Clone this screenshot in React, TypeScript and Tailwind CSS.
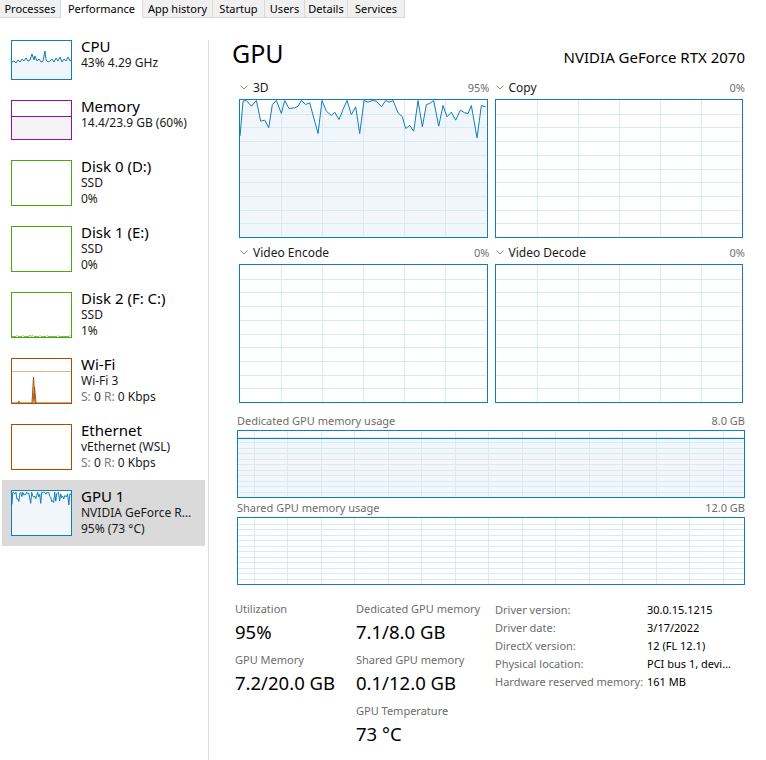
import React from "react";

const BLUE = "#117dbb";
const BLUEFILL = "#f1f6fa";
const GRID = "#d9eaf4";

type Pt = [number, number];

function Chart({
  w,
  h,
  cols = 0,
  rows = 0,
  colOffset = 0,
  colStep,
  pts,
  color = BLUE,
  fill = BLUEFILL,
  gridColor = GRID,
  extra,
}: {
  w: number;
  h: number;
  cols?: number;
  rows?: number;
  colOffset?: number;
  colStep?: number;
  pts?: Pt[][];
  color?: string;
  fill?: string;
  gridColor?: string;
  extra?: React.ReactNode;
}) {
  const vlines: number[] = [];
  if (cols > 0 || colStep) {
    const s = colStep ?? w / cols;
    for (let x = colOffset || s; x < w - 0.5; x += s) vlines.push(Math.round(x));
  }
  const hlines: number[] = [];
  if (rows > 0) {
    const s = h / rows;
    for (let y = s; y < h - 0.5; y += s) hlines.push(Math.round(y));
  }
  return (
    <svg width={w} height={h} className="block">
      {pts &&
        pts.slice(0, 1).map((p, i) => (
          <polygon
            key={"f" + i}
            points={`${p[0][0]},${h} ${p.map(([x, y]) => `${x},${y}`).join(" ")} ${p[p.length - 1][0]},${h}`}
            fill={fill}
          />
        ))}
      {vlines.map((x) => (
        <line key={"v" + x} x1={x + 0.5} y1={0} x2={x + 0.5} y2={h} stroke={gridColor} strokeWidth={1} shapeRendering="crispEdges" />
      ))}
      {hlines.map((y) => (
        <line key={"h" + y} x1={0} y1={y + 0.5} x2={w} y2={y + 0.5} stroke={gridColor} strokeWidth={1} shapeRendering="crispEdges" />
      ))}
      {extra}
      {pts &&
        pts.map((p, i) => (
          <polyline
            key={"l" + i}
            points={p.map(([x, y]) => `${x},${y}`).join(" ")}
            fill="none"
            stroke={color}
            strokeWidth={1}
            strokeLinejoin="round"
          />
        ))}
    </svg>
  );
}

const raw3D: [number, number][] = [
  [30, 320], [40, 215], [50, 213], [65, 230], [80, 212], [93, 275], [105, 272], [117, 295], [128, 225], [140, 213],
  [155, 252], [165, 213], [178, 237], [195, 235], [205, 230], [215, 213], [228, 225], [240, 220], [265, 312], [277, 213],
  [290, 245], [305, 258], [315, 248], [328, 270], [340, 240], [352, 213], [365, 255], [378, 232], [390, 312], [403, 213],
  [415, 218], [428, 213], [440, 215], [455, 232], [468, 213], [478, 218], [490, 213], [505, 250], [518, 262], [528, 297],
  [540, 288], [552, 305], [565, 213], [578, 292], [590, 225], [600, 222], [612, 213], [627, 290], [640, 228], [652, 262],
  [665, 248], [678, 272], [692, 242], [705, 250], [715, 252], [725, 228], [742, 325], [755, 228], [768, 232],
];
const pts3D: Pt[] = raw3D.map(([x, y]) => [Math.min(246, Math.max(0, x / 3 - 10.3)), Math.max(0.5, y / 3 - 70.5)]);
const ptsGpuThumb: Pt[] = pts3D.map(([x, y]) => [(x * 59) / 246, 1 + y * 0.34]);

const cpuThumb: Pt[] = [
  [0, 21], [2, 20], [4, 22], [6, 19], [8, 21], [10, 18], [12, 20], [14, 17], [16, 20], [18, 19], [20, 13], [22, 19], [23, 15],
  [25, 20], [27, 18], [29, 21], [31, 20], [33, 10], [34, 19], [36, 21], [38, 20], [40, 18], [42, 21], [44, 17], [46, 20],
  [48, 16], [50, 21], [52, 18], [54, 20], [56, 16], [58, 20], [59, 19],
];

function Thumb({
  color,
  h,
  children,
}: {
  color: string;
  h: number;
  children?: React.ReactNode;
}) {
  return (
    <div className="shrink-0 border bg-white" style={{ borderColor: color, width: 61, height: h }}>
      {children}
    </div>
  );
}

function SideItem({
  thumb,
  title,
  lines,
  selected,
}: {
  thumb: React.ReactNode;
  title: string;
  lines: React.ReactNode[];
  selected?: boolean;
}) {
  return (
    <div className={`ml-[2px] mr-[3px] flex items-start gap-[9px] py-[10px] pl-[9px] ${selected ? "bg-[#dadada]" : ""}`}>
      {thumb}
      <div className="-mb-[4px] -mt-[3px] min-w-0 flex-1 pr-[8px]">
        <div className="text-[15px] leading-[18px] text-black">{title}</div>
        {lines.map((l, i) => (
          <div key={i} className="truncate text-[12px] leading-[16px] text-[#1a1a1a]">
            {l}
          </div>
        ))}
      </div>
    </div>
  );
}

function Chevron() {
  return (
    <svg width="8" height="5" className="block">
      <path d="M0.5 0.5 L4 4 L7.5 0.5" fill="none" stroke="#8a8a8a" strokeWidth="1" />
    </svg>
  );
}

function GraphBlock({ label, pct, pts }: { label: string; pct: string; pts?: Pt[] }) {
  return (
    <div>
      <div className="flex h-[21px] items-start">
        <div className="flex h-[19px] flex-1 items-center">
          <div className="ml-[1px] mr-[5px]">
            <Chevron />
          </div>
          <span className="text-[12px] leading-[19px] text-[#1a1a1a]">{label}</span>
          <span className="-mr-[2px] ml-auto text-[11px] leading-[19px] text-[#707070]">{pct}</span>
        </div>
      </div>
      <div className="h-[139px] border border-[#117dbb] bg-white">
        <Chart w={246} h={137} cols={6} rows={10} pts={pts ? [pts] : undefined} />
      </div>
    </div>
  );
}

function MemBar({ label, right, level }: { label: string; right: string; level?: number }) {
  return (
    <div>
      <div className="flex h-[18px] justify-between text-[11px] leading-[18px] text-[#6d6d6d]">
        <span>{label}</span>
        <span>{right}</span>
      </div>
      <div className="h-[68px] border border-[#117dbb] bg-white">
        <Chart
          w={506}
          h={66}
          colStep={33.5}
          colOffset={15.7}
          rows={12}
          pts={level !== undefined ? [[[0, level], [506, level]]] : undefined}
        />
      </div>
    </div>
  );
}

function Stat({ label, value, className = "" }: { label: string; value: string; className?: string }) {
  return (
    <div className={className}>
      <div className="text-[11px] leading-[16px] text-[#6d6d6d]">{label}</div>
      <div className="mt-[2px] text-[18.5px] leading-[26px] text-black">{value}</div>
    </div>
  );
}

const tabs: [string, number][] = [
  ["Processes", 61],
  ["Performance", 82],
  ["App history", 70],
  ["Startup", 52],
  ["Users", 40],
  ["Details", 43],
  ["Services", 57],
];

export default function App() {
  const net = (
    <span>
      <span className="text-[#7a7a7a]">S:</span> 0 <span className="text-[#7a7a7a]">R:</span> 0 Kbps
    </span>
  );
  return (
    <div className="h-[760px] w-[766px] overflow-hidden bg-white font-['Noto_Sans',sans-serif] text-black">
      {/* Tabs */}
      <div className="flex h-[18px]">
        {tabs.map(([t, w]) => (
          <div
            key={t}
            className={`flex h-[18px] items-center justify-center border-r border-[#d9d9d9] text-[11px] leading-[18px] ${
              t === "Performance" ? "bg-white" : "border-b bg-[#f0f0f0]"
            }`}
            style={{ width: w }}
          >
            {t}
          </div>
        ))}
      </div>

      <div className="flex h-[742px]">
        {/* Sidebar */}
        <div className="flex w-[208px] shrink-0 flex-col pt-[12px]">
          <SideItem
            title="CPU"
            lines={["43%  4.29 GHz"]}
            thumb={
              <Thumb color={BLUE} h={40}>
                <Chart w={59} h={38} pts={[cpuThumb]} />
              </Thumb>
            }
          />
          <SideItem
            title="Memory"
            lines={["14.4/23.9 GB (60%)"]}
            thumb={
              <Thumb color="#8b12ae" h={40}>
                <Chart w={59} h={38} pts={[[[0, 15.5], [59, 15.5]]]} color="#8b12ae" fill="#f4f2f4" />
              </Thumb>
            }
          />
          <SideItem title="Disk 0 (D:)" lines={["SSD", "0%"]} thumb={<Thumb color="#4da60c" h={46} />} />
          <SideItem title="Disk 1 (E:)" lines={["SSD", "0%"]} thumb={<Thumb color="#4da60c" h={46} />} />
          <SideItem
            title="Disk 2 (F: C:)"
            lines={["SSD", "1%"]}
            thumb={
              <Thumb color="#4da60c" h={46}>
                <Chart
                  w={59}
                  h={44}
                  color="#7cc04a"
                  fill="#ffffff"
                  pts={[
                    [
                      [0, 43.5], [4, 43.5], [5, 42.5], [6, 43.5], [10, 43.5], [11, 42.5], [12, 43.5], [17, 43.5], [18, 42],
                      [19, 43.5], [21, 42.5], [22, 43.5], [27, 43.5], [28, 42.5], [29, 43.5], [34, 43.5], [35, 42.5], [36, 43.5],
                      [45, 43.5], [46, 42.5], [47, 43.5], [57, 43.5], [58, 42.5], [59, 43.5],
                    ],
                  ]}
                />
              </Thumb>
            }
          />
          <SideItem
            title="Wi-Fi"
            lines={["Wi-Fi 3", net]}
            thumb={
              <Thumb color="#a74f01" h={46}>
                <Chart
                  w={59}
                  h={44}
                  color="#a74f01"
                  fill="#fcf3eb"
                  extra={<line x1={0} y1={12.5} x2={59} y2={12.5} stroke="#d8b394" strokeWidth={1} />}
                  pts={[
                    [[0, 44], [6, 44], [7, 42], [8, 44], [20, 44], [21.5, 18], [23, 44], [59, 44]],
                    [[21, 44], [22.5, 28], [24, 44]],
                  ]}
                />
              </Thumb>
            }
          />
          <SideItem title="Ethernet" lines={["vEthernet (WSL)", net]} thumb={<Thumb color="#a74f01" h={46} />} />
          <SideItem
            selected
            title="GPU 1"
            lines={["NVIDIA GeForce RTX 2070", "95%  (73 °C)"]}
            thumb={
              <Thumb color={BLUE} h={46}>
                <Chart w={59} h={44} pts={[ptsGpuThumb]} />
              </Thumb>
            }
          />
        </div>

        {/* Divider */}
        <div className="mt-[22px] w-px shrink-0 bg-[#dedede]" />

        {/* Main */}
        <div className="min-w-0 flex-1 pl-[23px] pr-[21px]">
          <div className="mt-[20px] flex h-[40px] items-baseline justify-between">
            <span className="text-[25px] leading-[30px] text-black">GPU</span>
            <span className="text-[15px] leading-[20px] text-black">NVIDIA GeForce RTX 2070</span>
          </div>

          <div className="ml-[7px] mr-[2px] grid grid-cols-2 gap-x-[7px] gap-y-[5px]">
            <GraphBlock label="3D" pct="95%" pts={pts3D} />
            <GraphBlock label="Copy" pct="0%" />
            <GraphBlock label="Video Encode" pct="0%" />
            <GraphBlock label="Video Decode" pct="0%" />
          </div>

          <div className="ml-[5px] mt-[9px]">
            <MemBar label="Dedicated GPU memory usage" right="8.0 GB" level={7.5} />
          </div>
          <div className="ml-[5px] mt-[1px]">
            <MemBar label="Shared GPU memory usage" right="12.0 GB" />
          </div>

          <div className="ml-[3px] mt-[16px] flex">
            <div className="w-[121px] shrink-0">
              <Stat label="Utilization" value="95%" />
              <Stat className="mt-[7px]" label="GPU Memory" value="7.2/20.0 GB" />
            </div>
            <div className="w-[139px] shrink-0">
              <Stat label="Dedicated GPU memory" value="7.1/8.0 GB" />
              <Stat className="mt-[7px]" label="Shared GPU memory" value="0.1/12.0 GB" />
              <Stat className="mt-[7px]" label="GPU Temperature" value="73 °C" />
            </div>
            <div className="min-w-0 flex-1">
              {[
                ["Driver version:", "30.0.15.1215"],
                ["Driver date:", "3/17/2022"],
                ["DirectX version:", "12 (FL 12.1)"],
                ["Physical location:", "PCI bus 1, devi..."],
                ["Hardware reserved memory:", "161 MB"],
              ].map(([k, v]) => (
                <div key={k} className="flex h-[18px] text-[11px] leading-[18px]">
                  <span className="w-[152px] shrink-0 text-[#6d6d6d]">{k}</span>
                  <span className="whitespace-nowrap text-black">{v}</span>
                </div>
              ))}
            </div>
          </div>
        </div>
      </div>
    </div>
  );
}
